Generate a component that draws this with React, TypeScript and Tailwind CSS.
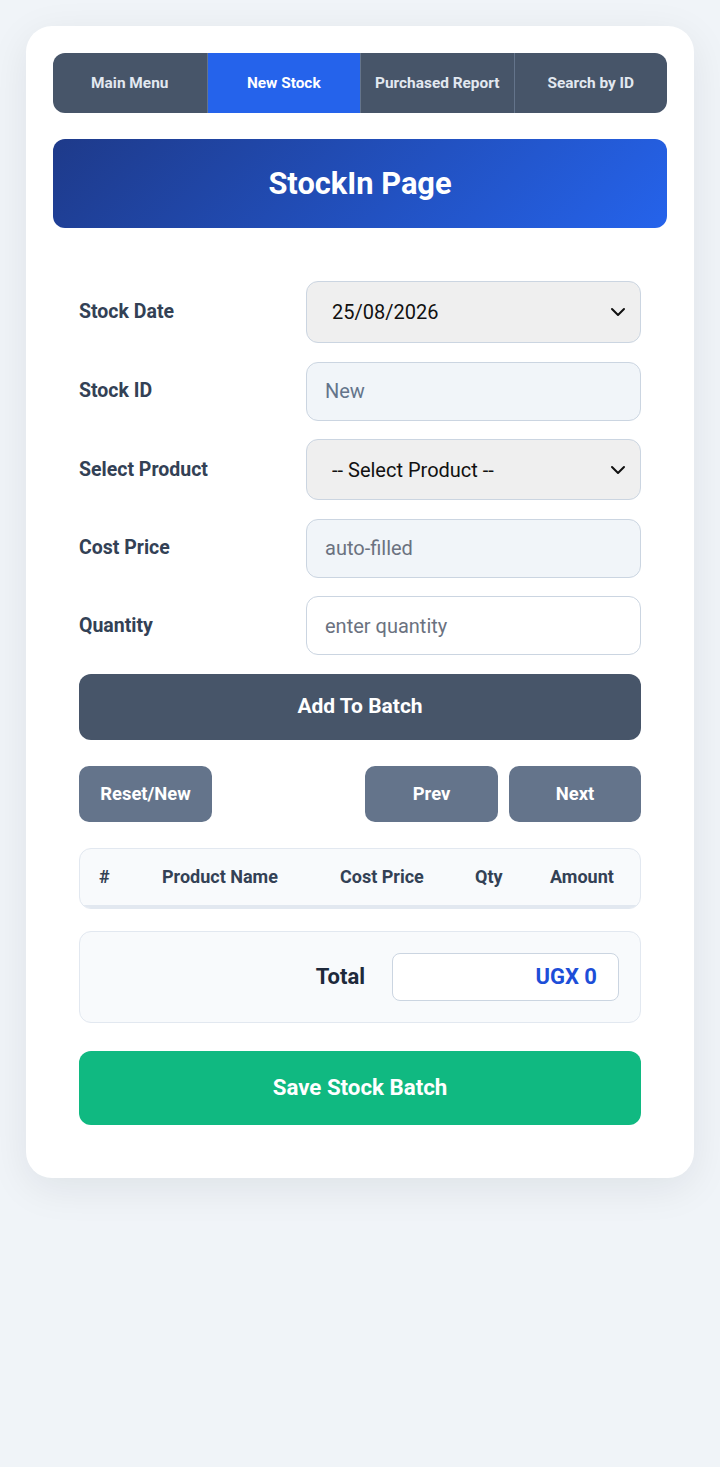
import { useState } from "react";

const tabs = ["Main Menu", "New Stock", "Purchased Report", "Search by ID"];

function Chevron() {
    return (
        <svg className="pointer-events-none absolute right-[15px] top-1/2 -translate-y-1/2" width="16" height="10" viewBox="0 0 16 10" fill="none">
            <path d="M2 2l6 6 6-6" stroke="#111" strokeWidth="2" strokeLinecap="round" strokeLinejoin="round" />
        </svg>
    );
}

function Label({ children }: { children: React.ReactNode }) {
    return <label className="text-[19.5px] font-bold text-[#334155]">{children}</label>;
}

export default function App() {
    const [active, setActive] = useState("New Stock");
    const [qty, setQty] = useState("");

    return (
        <div className="min-h-[1467px] bg-[#f0f4f8] p-[26px]" style={{ fontFamily: "Roboto, 'Liberation Sans', sans-serif" }}>
            <div className="bg-white rounded-[26px] p-[27px] shadow-[0_10px_40px_rgba(15,23,42,0.08)]">
                {/* nav */}
                <nav className="grid grid-cols-4 h-[60px] rounded-[12px] overflow-hidden bg-[#475569]">
                    {tabs.map((t, i) => (
                        <button
                            key={t}
                            onClick={() => setActive(t)}
                            className={`pt-[2px] text-[15.4px] font-bold ${i > 0 ? "border-l border-[#64748b]" : ""} ${active === t ? "bg-[#2563eb] text-white" : "text-[#e2e8f0]"}`}
                        >
                            {t}
                        </button>
                    ))}
                </nav>

                {/* header */}
                <div className="mt-[26px] h-[89px] rounded-[12px] bg-[linear-gradient(135deg,#1e3a8a,#2563eb)] flex items-center justify-center pt-[2px]">
                    <h1 className="text-[30.8px] font-bold text-white">StockIn Page</h1>
                </div>

                <div className="mt-[27px] p-[26px]">
                    <div className="flex flex-col gap-[18.5px]">
                        <div className="grid grid-cols-[227px_1fr] items-center">
                            <Label>Stock Date</Label>
                            <div className="relative">
                                <select className="appearance-none w-full h-[62px] rounded-[12px] border border-[#cbd5e1] bg-[#efefef] pl-[25px] text-[20px] text-[#111] outline-none">
                                    <option>25/08/2026</option>
                                </select>
                                <Chevron />
                            </div>
                        </div>
                        <div className="grid grid-cols-[227px_1fr] items-center">
                            <Label>Stock ID</Label>
                            <input readOnly placeholder="New" className="w-full h-[59px] rounded-[12px] border border-[#cbd5e1] bg-[#f1f5f9] px-[18px] text-[20px] placeholder:text-[#64748b] outline-none" />
                        </div>
                        <div className="grid grid-cols-[227px_1fr] items-center">
                            <Label>Select Product</Label>
                            <div className="relative">
                                <select className="appearance-none w-full h-[61px] rounded-[12px] border border-[#cbd5e1] bg-[#efefef] pl-[25px] text-[20px] text-[#111] outline-none">
                                    <option>-- Select Product --</option>
                                </select>
                                <Chevron />
                            </div>
                        </div>
                        <div className="grid grid-cols-[227px_1fr] items-center">
                            <Label>Cost Price</Label>
                            <input readOnly placeholder="auto-filled" className="w-full h-[59px] rounded-[12px] border border-[#cbd5e1] bg-[#f1f5f9] px-[18px] text-[20px] placeholder:text-[#6b7280] outline-none" />
                        </div>
                        <div className="grid grid-cols-[227px_1fr] items-center">
                            <Label>Quantity</Label>
                            <input value={qty} onChange={(e) => setQty(e.target.value)} placeholder="enter quantity" className="w-full h-[59px] rounded-[12px] border border-[#cbd5e1] bg-white px-[18px] text-[20px] placeholder:text-[#6b7280] outline-none" />
                        </div>
                    </div>

                    <button className="mt-[19px] w-full h-[66px] rounded-[12px] bg-[#475569] text-white text-[21px] font-bold">
                        Add To Batch
                    </button>

                    <div className="mt-[26px] flex gap-[11px]">
                        <button className="w-[133px] h-[56px] rounded-[10px] bg-[#64748b] text-white text-[18.4px] font-bold">Reset/New</button>
                        <div className="flex-1" />
                        <button className="w-[133px] h-[56px] rounded-[10px] bg-[#64748b] text-white text-[18.4px] font-bold">Prev</button>
                        <button className="w-[132px] h-[56px] rounded-[10px] bg-[#64748b] text-white text-[18.4px] font-bold">Next</button>
                    </div>

                    <div className="mt-[26px] rounded-[12px] border border-[#e2e8f0] bg-[#f8fafc] overflow-hidden">
                        <table className="w-full table-fixed">
                            <thead>
                                <tr className="h-[57px] border-b-[3px] border-[#e2e8f0] text-[18px] text-[#334155]">
                                    <th className="w-[62px] pl-[19px] text-left font-bold">#</th>
                                    <th className="w-[178px] pl-[20px] text-left font-bold">Product Name</th>
                                    <th className="w-[135px] pl-[20px] text-left font-bold">Cost Price</th>
                                    <th className="w-[75px] pl-[20px] text-left font-bold">Qty</th>
                                    <th className="pl-[20px] text-left font-bold">Amount</th>
                                </tr>
                            </thead>
                            <tbody></tbody>
                        </table>
                    </div>

                    <div className="mt-[22px] h-[92px] rounded-[12px] border border-[#e2e8f0] bg-[#f8fafc] flex items-center justify-end pr-[21px] gap-[27px]">
                        <span className="text-[22px] font-bold text-[#1e293b]">Total</span>
                        <div className="w-[227px] h-[48px] rounded-[8px] border border-[#cbd5e1] bg-white flex items-center justify-end pr-[21px]">
                            <span className="text-[22px] font-bold text-[#1d4ed8]">UGX 0</span>
                        </div>
                    </div>

                    <button className="mt-[28px] w-full h-[74px] rounded-[12px] bg-[#10b981] text-white text-[22.3px] font-bold">
                        Save Stock Batch
                    </button>
                </div>
            </div>
        </div>
    );
}
